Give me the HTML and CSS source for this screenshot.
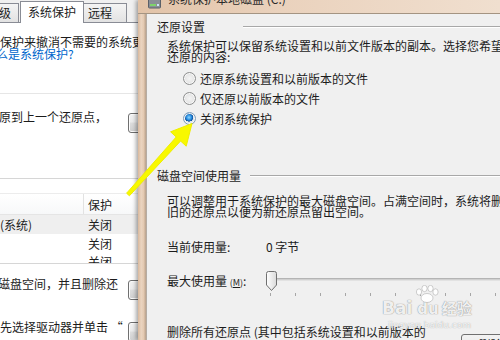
FILE: index.html
```html
<!DOCTYPE html>
<html lang="zh-CN">
<head>
<meta charset="utf-8">
<title>系统保护</title>
<link rel="stylesheet" href="styles.css">
</head>
<body>
<div class="screen">
  <div class="left-win">
    <div class="tabs">
      <div class="tab tab-first">高级</div>
      <div class="tab tab-active">系统保护</div>
      <div class="tab tab-remote">远程</div>
    </div>
    <div class="page">
      <div class="lw-line lw-first"><span class="cut-24">系统保护来撤消不需要的系统更改</span></div>
      <div class="lw-line"><a class="lw-link cut-16" href="#">什么是系统保护?</a></div>
      <div class="lw-sep"></div>
      <div class="lw-row lw-row-1">
        <div class="lw-txt"><span class="cut-13">还原到上一个还原点，</span></div>
        <div class="btn"></div>
      </div>
      <div class="lw-list">
        <div class="lw-list-gap"></div>
        <div class="lw-head"><span class="col-a"></span><span class="col-b">保护</span></div>
        <div class="lw-item lw-item-sel"><span class="col-a">(系统)</span><span class="col-b">关闭</span></div>
        <div class="lw-item"><span class="col-a"></span><span class="col-b">关闭</span></div>
        <div class="lw-item"><span class="col-a"></span><span class="col-b">关闭</span></div>
      </div>
      <div class="lw-row lw-row-2">
        <div class="lw-txt lw-txt-short"><span class="cut-14">的磁盘空间，并且删除还</span></div>
        <div class="btn"></div>
      </div>
      <div class="lw-row lw-row-3">
        <div class="lw-txt lw-txt-short"><span class="cut-12">首先选择驱动器并单击 “</span></div>
        <div class="btn btn-low"></div>
      </div>
    </div>
  </div>

  <div class="dialog">
    <div class="titlebar">
      <svg class="title-icon" width="13" height="9" viewBox="0 0 13 9">
        <rect x="0.5" y="-3" width="12" height="11" rx="1" fill="#8a8f96" stroke="#5b6068"/>
        <rect x="2" y="4" width="6" height="2" fill="#7fd36a"/>
        <rect x="9" y="4" width="2" height="2" fill="#cfe6f5"/>
      </svg>
      <span class="title-text">系统保护本地磁盘 (C:)</span>
    </div>
    <div class="dlg-body">
      <div class="frame-left"></div>
      <div class="content">
        <div class="group-head"><span>还原设置</span><span class="rule rule-wide"></span></div>
        <p class="para para-1">系统保护可以保留系统设置和以前文件版本的副本。选择您希望<br>还原的内容:</p>
        <div class="radios">
          <div class="radio-row"><span class="radio"></span><span>还原系统设置和以前版本的文件</span></div>
          <div class="radio-row"><span class="radio"></span><span>仅还原以前版本的文件</span></div>
          <div class="radio-row"><span class="radio radio-on"></span><span>关闭系统保护</span></div>
        </div>
        <div class="group-head group-head-2"><span>磁盘空间使用量</span><span class="rule rule-narrow"></span></div>
        <p class="para para-2">可以调整用于系统保护的最大磁盘空间。占满空间时，系统将删除<br>旧的还原点以便为新还原点留出空间。</p>
        <div class="info-row"><span class="info-label">当前使用量:</span><span>0 字节</span></div>
        <div class="slider-row">
          <span class="info-label">最大使用量 <span class="small-m">(<u>M</u>)</span>:</span>
          <svg class="thumb" width="11" height="20" viewBox="0 0 11 20">
            <defs>
              <linearGradient id="tg" x1="0" y1="0" x2="1" y2="0">
                <stop offset="0" stop-color="#ffffff"/>
                <stop offset="1" stop-color="#dadada"/>
              </linearGradient>
            </defs>
            <path d="M2.5 0.5 H8.5 Q10.5 0.5 10.5 2.5 V14 L5.5 19.5 L0.5 14 V2.5 Q0.5 0.5 2.5 0.5 Z" fill="url(#tg)" stroke="#707070"/>
          </svg>
          <span class="track"></span>
        </div>
        <div class="ticks">
          <span class="tick"></span><span class="tick"></span><span class="tick"></span><span class="tick"></span><span class="tick"></span>
          <span class="tick"></span><span class="tick"></span><span class="tick"></span><span class="tick"></span><span class="tick"></span>
        </div>
        <div class="delete-row">
          <span class="delete-text">删除所有还原点 (其中包括系统设置和以前版本的</span>
          <span class="btn-del">删除(D)</span>
        </div>
      </div>
    </div>
  </div>
</div>

<svg class="arrow" width="500" height="340" viewBox="0 0 500 340">
  <polygon points="126.6,193.2 176.2,137.0 170.6,131.8 192,123.5 186.2,146.2 180.6,141.0 129.4,195.8" fill="#f8f800" stroke="#eeee00" stroke-width="1" stroke-linejoin="round"/>
</svg>

<div class="watermark">
  <svg class="paw" width="26" height="18" viewBox="0 0 26 18">
    <g fill="rgba(255,255,255,0.9)" stroke="rgba(140,140,140,0.5)" stroke-width="0.8">
      <ellipse cx="5" cy="7" rx="2.6" ry="3.2"/>
      <ellipse cx="10.5" cy="3.5" rx="2.6" ry="3.2"/>
      <ellipse cx="16.5" cy="3.5" rx="2.6" ry="3.2"/>
      <ellipse cx="21.5" cy="7" rx="2.6" ry="3.2"/>
      <ellipse cx="13" cy="13" rx="6" ry="4.5"/>
    </g>
  </svg>
  <div class="wm-main"><span class="wm-bai">Bai</span><span class="wm-du">du</span><span class="wm-jy">经验</span></div>
  <div class="wm-sub">jingyan.baidu.com</div>
</div>
</body>
</html>
```

FILE: styles.css
```css
* { box-sizing: border-box; margin: 0; padding: 0; }
html, body { width: 500px; height: 340px; overflow: hidden; }
body {
  position: relative;
  font-family: "Noto Sans CJK SC", "Noto Sans", sans-serif;
  font-size: 12px;
  color: #1c1c1c;
  background: #f0f0f0;
}
.screen { display: flex; width: 500px; height: 340px; }

/* ---------- left (background) window ---------- */
.left-win {
  width: 138px; flex: none;
  display: flex; flex-direction: column;
  overflow: hidden;
  background: #ffffff;
}
.tabs {
  height: 23px; flex: none;
  display: flex; align-items: flex-end;
  background: #f0f0f0;
  border-bottom: 1px solid #898c95;
}
.tab {
  flex: none;
  height: 19px;
  line-height: 18px;
  padding: 0 7px;
  white-space: nowrap;
  border: 1px solid #898c95;
  border-bottom: none;
  background: linear-gradient(#f4f4f4, #e2e2e2);
  color: #1c1c1c;
}
.tab-first { margin-left: -21px; }
.tab-active {
  height: 22px;
  line-height: 20px;
  margin-left: 1px;
  margin-bottom: -1px;
  background: #ffffff;
}
.tab-remote { padding: 0 14px 0 4px; margin-left: -1px; }

.page { display: flex; flex-direction: column; flex: 1; background: #ffffff; }
.lw-line { height: 12px; line-height: 12px; white-space: nowrap; overflow: hidden; }
.lw-first { margin-top: 13px; }
.lw-link { color: #0066cc; text-decoration: underline; }
.cut-24 { display: inline-block; margin-left: -24px; }
.cut-16 { display: inline-block; margin-left: -16px; }
.cut-13 { display: inline-block; margin-left: -13px; }
.cut-14 { display: inline-block; margin-left: -14px; }
.cut-12 { display: inline-block; margin-left: -12px; }
.lw-sep { height: 1px; margin-top: 33px; background: #e6e6e6; }

.lw-row { display: flex; align-items: flex-start; flex: none; }
.lw-row-1 { margin-top: 16px; }
.lw-row-2 { margin-top: 13px; }
.lw-row-3 { margin-top: 20px; }
.lw-txt {
  width: 128px; flex: none;
  height: 14px; line-height: 14px;
  overflow: hidden; white-space: nowrap;
}
.btn {
  width: 70px; height: 20px; flex: none;
  margin-top: 3px;
  border: 1px solid #707070;
  border-radius: 3px;
  background: linear-gradient(#f2f2f2 0%, #ebebeb 45%, #dddddd 50%, #cfcfcf 100%);
  box-shadow: inset 0 0 0 1px #fcfcfc;
}
.btn-low { margin-top: 2px; }

.lw-list {
  margin-top: 45px;
  height: 86px; flex: none;
  overflow: hidden;
  border-top: 1px solid #d6d6d6;
  border-bottom: 1px solid #d6d6d6;
  display: flex; flex-direction: column;
}
.lw-list-gap { height: 14px; flex: none; }
.lw-head {
  height: 22px; flex: none;
  display: flex; align-items: center;
  border-top: 1px solid #ececec;
  border-bottom: 1px solid #e5e5e5;
  background: linear-gradient(#ffffff, #f7f8f9);
}
.lw-head .col-a { border-right: 1px solid #e2e2e2; align-self: stretch; }
.col-a { width: 84px; flex: none; white-space: nowrap; }
.col-b { padding-left: 4px; white-space: nowrap; }
.lw-item { height: 18px; flex: none; display: flex; align-items: center; }
.lw-item-sel { height: 19px; background: #efefef; }

/* ---------- dialog ---------- */
.dialog {
  flex: 1; min-width: 0;
  display: flex; flex-direction: column;
  position: relative;
  box-shadow: -2px 0 4px rgba(0, 0, 0, 0.35);
}
.titlebar {
  height: 14px; flex: none;
  display: flex; align-items: flex-start;
  overflow: hidden;
  padding-left: 10px;
  background: linear-gradient(to right, #e2c3a8, #ead2bd 40%, #f0dfcf);
  border-bottom: 1px solid #a49482;
}
.title-icon { flex: none; }
.title-text {
  margin-left: 7px;
  margin-top: -8px;
  line-height: 14px;
  white-space: nowrap;
  color: #2b2b2b;
}
.dlg-body { flex: 1; display: flex; min-height: 0; }
.frame-left {
  width: 9px; flex: none;
  background: linear-gradient(to right, #d9b99d, #ead4c0 40%, #e4cab2 70%, #b9a18b);
  border-right: 1px solid #b5aca3;
}
.content {
  flex: 1; min-width: 0;
  display: flex; flex-direction: column;
  overflow: hidden;
  padding-left: 10px;
  background: #f0f0f0;
}
.group-head {
  height: 14px; flex: none;
  margin-top: 6px;
  display: flex; align-items: center;
  line-height: 14px; white-space: nowrap;
}
.group-head-2 { margin-top: 41px; }
.rule {
  flex: 1;
  height: 2px;
  border-top: 1px solid #a8a8a8;
  border-bottom: 1px solid #ffffff;
}
.rule-wide { margin-left: 38px; }
.rule-narrow { margin-left: 9px; }

.para { padding-left: 10px; line-height: 11px; white-space: nowrap; flex: none; }
.para-1 { margin-top: 6px; }
.para-2 { margin-top: 12px; }

.radios { margin-top: 6px; display: flex; flex-direction: column; flex: none; }
.radio-row {
  height: 20px;
  display: flex; align-items: center; gap: 4px;
  padding-left: 26px;
  white-space: nowrap;
}
.radio {
  width: 13px; height: 13px; flex: none;
  border-radius: 50%;
  border: 1px solid #8e8f8f;
  background: radial-gradient(circle at 50% 50%, #f4f4f4 0%, #e6e6e6 55%, #cdcdcd 100%);
  box-shadow: inset 0 0 0 1px #f8f8f8;
}
.radio-on {
  border-color: #7f9db9;
  background:
    radial-gradient(circle at 45% 40%, #8fd6ff 0%, #2a8fe0 28%, #0c4f9c 45%, transparent 48%),
    radial-gradient(circle, #e8eef4 0%, #cfd8e0 100%);
}

.info-row {
  margin-top: 23px;
  height: 14px; line-height: 14px;
  padding-left: 10px;
  display: flex; white-space: nowrap; flex: none;
}
.info-label { width: 99px; flex: none; white-space: nowrap; }
.small-m { font-size: 9px; }
.slider-row {
  margin-top: 15px;
  height: 22px; flex: none;
  padding-left: 10px;
  display: flex; align-items: center;
}
.thumb { flex: none; margin-top: 1px; }
.track {
  flex: 1; height: 3px;
  margin-top: -1px;
  border-top: 1px solid #b4b4b4;
  border-bottom: 1px solid #e2e2e2;
  background: #d0d0d0;
}
.ticks {
  margin-top: 2px;
  height: 3px; flex: none;
  padding-left: 113px;
  display: flex; gap: 24px;
}
.tick { width: 1px; height: 3px; flex: none; background: #a6a6a6; }

.delete-row {
  margin-top: 29px;
  padding-left: 10px;
  display: flex; align-items: flex-start; flex: none;
  white-space: nowrap;
}
.delete-text { height: 14px; line-height: 14px; flex: none; }
.btn-del {
  flex: none;
  margin-left: 35px; margin-top: 9px;
  width: 76px; height: 22px;
  line-height: 20px;
  text-align: center;
  border: 1px solid #707070;
  border-radius: 3px;
  background: linear-gradient(#f2f2f2, #e6e6e6);
}

/* ---------- overlays ---------- */
.arrow { position: absolute; left: 0; top: 0; pointer-events: none; }
.watermark {
  position: absolute; left: 382px; top: 285px;
  width: 100px;
  pointer-events: none;
}
.paw { position: absolute; left: 32px; top: 0; }
.wm-main {
  margin-top: 14px;
  display: flex; align-items: baseline;
  font-family: "DejaVu Sans", sans-serif;
  font-weight: bold;
  font-size: 17px; line-height: 18px;
  color: rgba(255, 255, 255, 0.9);
  text-shadow: 0 0 1px rgba(110, 110, 110, 0.7), 0 0 1px rgba(110, 110, 110, 0.5);
}
.wm-du { margin-left: 5px; font-size: 15px; }
.wm-jy { margin-left: 3px; font-family: "Noto Sans CJK SC", sans-serif; font-size: 15px; }
.wm-sub {
  margin-top: 2px;
  padding-left: 6px;
  font-family: "DejaVu Sans", sans-serif;
  font-size: 9px; line-height: 10px;
  color: rgba(255, 255, 255, 0.9);
  text-shadow: 0 0 1px rgba(110, 110, 110, 0.7);
}
```
